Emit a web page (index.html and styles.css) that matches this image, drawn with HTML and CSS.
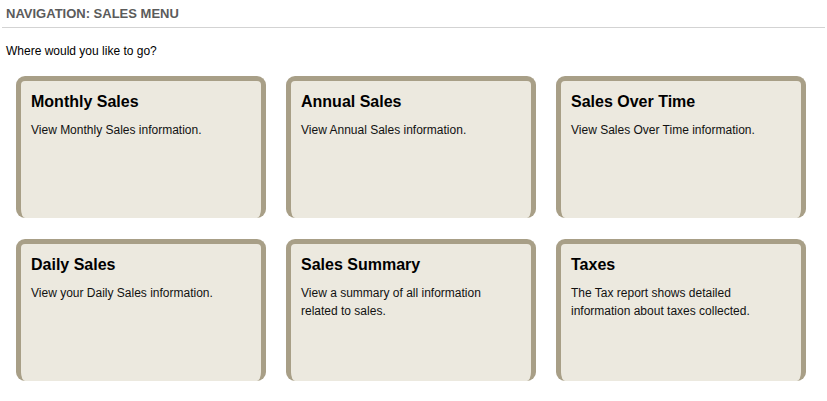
FILE: index.html
```html
<!DOCTYPE html>
<html lang="en">
<head>
  <meta charset="UTF-8" />
  <title>Navigation: Sales Menu</title>
  <link rel="stylesheet" href="styles.css">
</head>
<body>
  <h1 class="page-title">Navigation: Sales Menu</h1>
  <p class="intro">Where would you like to go?</p>

  <div class="menu">
    <a class="tile" href="#">
      <h3>Monthly Sales</h3>
      <p>View Monthly Sales information.</p>
    </a>
    <a class="tile" href="#">
      <h3>Annual Sales</h3>
      <p>View Annual Sales information.</p>
    </a>
    <a class="tile" href="#">
      <h3>Sales Over Time</h3>
      <p>View Sales Over Time information.</p>
    </a>
    <a class="tile" href="#">
      <h3>Daily Sales</h3>
      <p>View your Daily Sales information.</p>
    </a>
    <a class="tile" href="#">
      <h3>Sales Summary</h3>
      <p>View a summary of all information related to sales.</p>
    </a>
    <a class="tile" href="#">
      <h3>Taxes</h3>
      <p>The Tax report shows detailed information about taxes collected.</p>
    </a>
  </div>
</body>
</html>
```

FILE: styles.css
```css
body {
  margin: 0;
  font-family: "Liberation Sans", Arial, sans-serif;
  font-size: 12px;
  color: #000;
  background: #fff;
}
.page-title {
  margin: 0 2px;
  padding: 6px 4px 6px;
  font-size: 13px;
  line-height: 15px;
  font-weight: bold;
  text-transform: uppercase;
  color: #5b5b5b;
  border-bottom: 1px solid #d3d3d3;
}
.intro {
  margin: 16px 0 0 6px;
  line-height: 15px;
}
.menu {
  display: grid;
  grid-template-columns: repeat(3, 250px);
  grid-auto-rows: 142px;
  column-gap: 20px;
  row-gap: 21px;
  margin: 17px 0 0 16px;
}
.tile {
  display: block;
  box-sizing: border-box;
  background: #ecE9df;
  border: 5px solid #a89f87;
  border-bottom: 0;
  border-radius: 9px;
  padding: 11px 10px 0;
  color: #000;
  text-decoration: none;
}
.tile h3 {
  margin: 0;
  font-size: 16px;
  line-height: 19px;
  font-weight: bold;
}
.tile p {
  margin: 10px 0 0;
  line-height: 18px;
  color: #111;
  padding-right: 20px;
}
```
